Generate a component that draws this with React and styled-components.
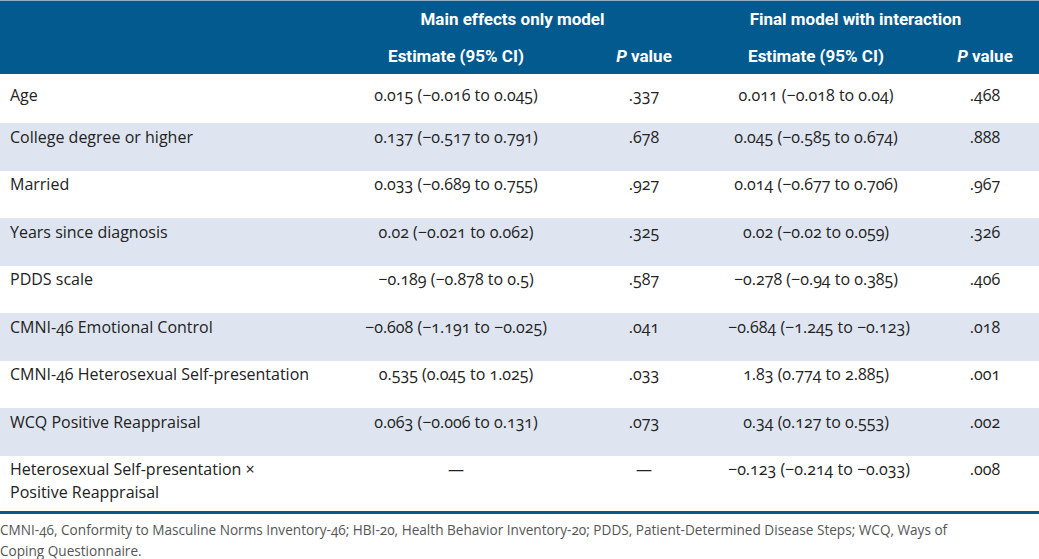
import React from "react";
import styled, { createGlobalStyle } from "styled-components";

const Global = createGlobalStyle`
  html, body { margin: 0; padding: 0; background: #ffffff; }
  body { font-family: "Open Sans", "Noto Sans", sans-serif; color: #222; }
`;

const Wrap = styled.div`
  width: 1039px;
  display: flex;
  flex-direction: column;
`;

const Table = styled.table`
  width: 1039px;
  border-collapse: collapse;
  table-layout: fixed;
  border-top: 1px solid #8eaecb;
  border-bottom: 3px solid #035a8f;
`;

const Head = styled.thead`
  background: #035a8f;
  color: #ffffff;
`;

const Th = styled.th`
  font-family: "Liberation Sans Narrow", "Roboto", "Noto Sans", sans-serif;
  font-weight: 700;
  font-size: 17px;
  line-height: 22px;
  text-align: center;
  padding: ${(p) => (p.$top ? "7px 0 7px" : "8px 0 7px")};
  padding-left: ${(p) => p.$pl || 0}px;
  padding-right: ${(p) => p.$pr || 0}px;
  white-space: nowrap;
  i { font-style: italic; }
`;

const Row = styled.tr`
  background: ${(p) => (p.$alt ? "#dfe5f0" : "#ffffff")};
`;

const Td = styled.td`
  font-size: 16px;
  line-height: 23px;
  padding-top: ${(p) => (p.$first ? "9.5px" : "2.5px")};
  padding-bottom: ${(p) => (p.$first ? "16.5px" : p.$last ? "6.5px" : "22px")};
  padding-left: ${(p) => p.$pl || 0}px;
  padding-right: 0;
  text-align: ${(p) => (p.$left ? "left" : "center")};
  vertical-align: top;
  white-space: nowrap;
  font-variant-numeric: oldstyle-nums;
  color: #222;
`;

const Note = styled.p`
  margin: 0;
  padding: 5px 0 0 0;
  font-size: 13.6px;
  line-height: 21px;
  color: #555;
  font-variant-numeric: oldstyle-nums;
`;

const rows = [
  ["Age", "0.015 (−0.016 to 0.045)", ".337", "0.011 (−0.018 to 0.04)", ".468"],
  ["College degree or higher", "0.137 (−0.517 to 0.791)", ".678", "0.045 (−0.585 to 0.674)", ".888"],
  ["Married", "0.033 (−0.689 to 0.755)", ".927", "0.014 (−0.677 to 0.706)", ".967"],
  ["Years since diagnosis", "0.02 (−0.021 to 0.062)", ".325", "0.02 (−0.02 to 0.059)", ".326"],
  ["PDDS scale", "−0.189 (−0.878 to 0.5)", ".587", "−0.278 (−0.94 to 0.385)", ".406"],
  ["CMNI-46 Emotional Control", "−0.608 (−1.191 to −0.025)", ".041", "−0.684 (−1.245 to −0.123)", ".018"],
  ["CMNI-46 Heterosexual Self-presentation", "0.535 (0.045 to 1.025)", ".033", "1.83 (0.774 to 2.885)", ".001"],
  ["WCQ Positive Reappraisal", "0.063 (−0.006 to 0.131)", ".073", "0.34 (0.127 to 0.553)", ".002"],
  [["Heterosexual Self-presentation ×", "Positive Reappraisal"], "—", "—", "−0.123 (−0.214 to −0.033)", ".008"],
];

export default function App() {
  return (
    <Wrap>
      <Global />
      <Table>
        <colgroup>
          <col style={{ width: 352 }} />
          <col style={{ width: 208 }} />
          <col style={{ width: 168 }} />
          <col style={{ width: 176 }} />
          <col style={{ width: 135 }} />
        </colgroup>
        <Head>
          <tr>
            <Th $top />
            <Th $top colSpan={2} $pr={55}>Main effects only model</Th>
            <Th $top colSpan={2} $pr={56}>Final model with interaction</Th>
          </tr>
          <tr>
            <Th />
            <Th>Estimate (95% CI)</Th>
            <Th><i>P</i> value</Th>
            <Th>Estimate (95% CI)</Th>
            <Th $pl={27}><i>P</i> value</Th>
          </tr>
        </Head>
        <tbody>
          {rows.map((r, i) => {
            const first = i === 0;
            const last = i === rows.length - 1;
            const f = { $first: first, $last: last };
            return (
              <Row key={i} $alt={i % 2 === 1}>
                <Td $left $pl={10} {...f}>
                  {Array.isArray(r[0]) ? (
                    <>
                      {r[0][0]}
                      <br />
                      {r[0][1]}
                    </>
                  ) : (
                    r[0]
                  )}
                </Td>
                <Td {...f}>{r[1]}</Td>
                <Td {...f}>{r[2]}</Td>
                <Td {...f}>{r[3]}</Td>
                <Td $pl={27} {...f}>{r[4]}</Td>
              </Row>
            );
          })}
        </tbody>
      </Table>
      <Note>
        CMNI-46, Conformity to Masculine Norms Inventory-46; HBI-20, Health Behavior Inventory-20; PDDS, Patient-Determined Disease Steps; WCQ, Ways of
        <br />
        Coping Questionnaire.
      </Note>
    </Wrap>
  );
}
